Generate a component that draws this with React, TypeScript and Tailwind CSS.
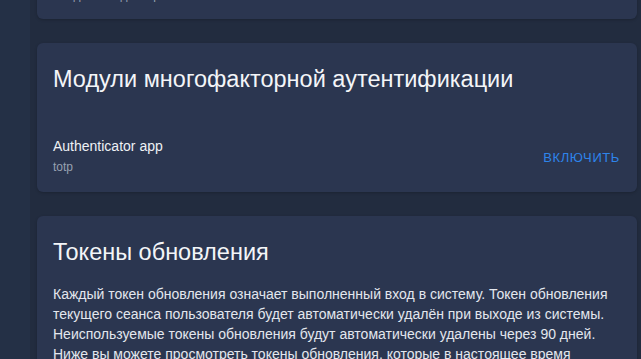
import React from "react";

export default function App() {
  return (
    <div
      className="flex h-[359px] w-[641px] overflow-hidden bg-[#222c3f]"
      style={{ fontFamily: '"Liberation Sans", Arial, sans-serif' }}
    >
      <div className="w-[30px] shrink-0 bg-[#243046]" />
      <div className="mt-[-57px] flex min-w-0 flex-1 flex-col gap-6 pl-[7px] pr-[4px]">
        <section className="rounded-md bg-[#2b3650] px-4 pb-[16px] pt-5 shadow-[0_1px_3px_rgba(0,0,0,0.2)]">
          <div className="flex items-center justify-between">
            <div className="flex flex-col">
              <span className="text-sm leading-5 text-[#eef1f5]">Пароль</span>
              <span className="mt-[4px] text-xs leading-4 text-[#97a1b1]">Создано 12 декабря 2023</span>
            </div>
          </div>
        </section>

        <section className="rounded-md bg-[#2b3650] px-4 pb-[17px] pt-5 shadow-[0_1px_3px_rgba(0,0,0,0.2)]">
          <h2 className="text-[23.5px] leading-8 text-[#f3f5f8]">Модули многофакторной аутентификации</h2>
          <div className="mt-[41px] flex items-center justify-between">
            <div className="flex flex-col">
              <span className="text-sm leading-5 text-[#eef1f5]">Authenticator app</span>
              <span className="mt-[3px] text-xs leading-4 text-[#97a1b1]">totp</span>
            </div>
            <button className="mr-[1px] mt-[4px] text-[13px] font-normal uppercase tracking-[0.6px] text-[#2e84ea]">
              Включить
            </button>
          </div>
        </section>

        <section className="rounded-md bg-[#2b3650] px-4 pb-5 pt-5 shadow-[0_1px_3px_rgba(0,0,0,0.2)]">
          <h2 className="text-[23.5px] leading-8 text-[#f3f5f8]">Токены обновления</h2>
          <p className="mt-4 text-sm leading-5 text-[#e3e7ee]">
            Каждый токен обновления означает выполненный вход в систему. Токен обновления текущего сеанса
            пользователя будет автоматически удалён при выходе из системы. Неиспользуемые токены обновления
            будут автоматически удалены через 90 дней. Ниже вы можете просмотреть токены обновления, которые в
            настоящее время активны для вашей учётной записи.
          </p>
        </section>
      </div>
    </div>
  );
}
